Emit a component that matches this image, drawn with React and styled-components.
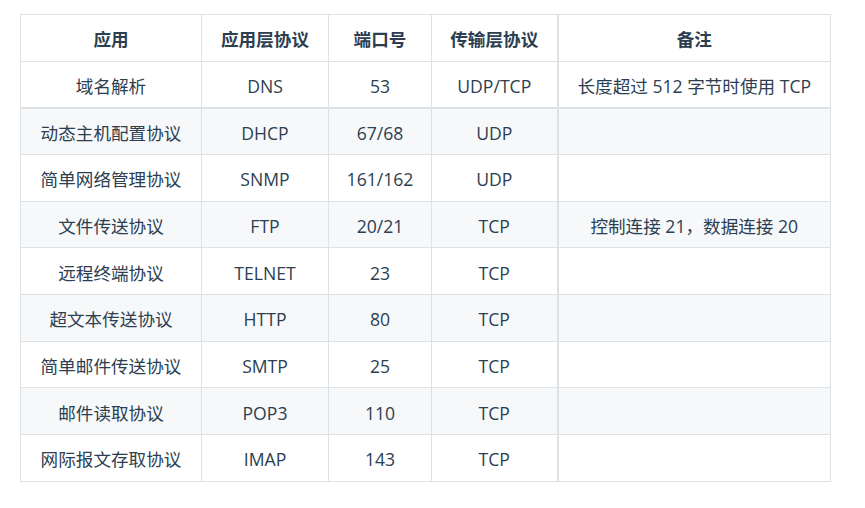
import React from "react";
import styled, { createGlobalStyle } from "styled-components";

const Global = createGlobalStyle`
  html, body { margin: 0; padding: 0; background: #fff; }
  body {
    font-family: "Open Sans", "Noto Sans CJK SC", sans-serif;
    color: #2c3e50;
  }
`;

const Page = styled.div`
  padding: 14px 0 0 20px;
`;

const Table = styled.table`
  border-collapse: collapse;
  table-layout: fixed;
  width: 810px;
  font-size: 17.6px;
`;

const Col = styled.col`
  width: ${(p) => p.$w}px;
`;

const Row = styled.tr`
  background: ${(p) => (p.$shade ? "#f6f8fa" : "#fff")};
  height: ${(p) => p.$h}px;
`;

const Head = styled.th`
  border: 1px solid #dfe2e5;
  border-left-width: ${(p) => (p.$thick ? 2 : 1)}px;
  padding: 2px 8px 0;
  font-weight: 700;
  text-align: center;
  line-height: 24px;
`;

const Cell = styled.td`
  border: 1px solid #dfe2e5;
  border-left-width: ${(p) => (p.$thick ? 2 : 1)}px;
  border-bottom-width: ${(p) => (p.$thickBottom ? 2 : 1)}px;
  padding: 3px 8px 0;
  text-align: center;
  line-height: 24px;
  white-space: nowrap;
`;

const headers = ["应用", "应用层协议", "端口号", "传输层协议", "备注"];
const rows = [
  ["域名解析", "DNS", "53", "UDP/TCP", "长度超过 512 字节时使用 TCP"],
  ["动态主机配置协议", "DHCP", "67/68", "UDP", ""],
  ["简单网络管理协议", "SNMP", "161/162", "UDP", ""],
  ["文件传送协议", "FTP", "20/21", "TCP", "控制连接 21，数据连接 20"],
  ["远程终端协议", "TELNET", "23", "TCP", ""],
  ["超文本传送协议", "HTTP", "80", "TCP", ""],
  ["简单邮件传送协议", "SMTP", "25", "TCP", ""],
  ["邮件读取协议", "POP3", "110", "TCP", ""],
  ["网际报文存取协议", "IMAP", "143", "TCP", ""],
];
const widths = [181, 127, 103, 126, 273];

export default function App() {
  return (
    <>
      <Global />
      <Page>
        <Table>
          <colgroup>
            {widths.map((w, i) => (
              <Col key={i} $w={w} />
            ))}
          </colgroup>
          <thead>
            <Row $h={47}>
              {headers.map((h, i) => (
                <Head key={h} $thick={i === 4}>
                  {h}
                </Head>
              ))}
            </Row>
          </thead>
          <tbody>
            {rows.map((r, ri) => (
              <Row key={ri} $shade={ri % 2 === 1} $h={ri === 0 ? 46.5 : 46.625}>
                {r.map((c, ci) => (
                  <Cell key={ci} $thick={ci === 4} $thickBottom={ri === 0}>
                    {c}
                  </Cell>
                ))}
              </Row>
            ))}
          </tbody>
        </Table>
      </Page>
    </>
  );
}
